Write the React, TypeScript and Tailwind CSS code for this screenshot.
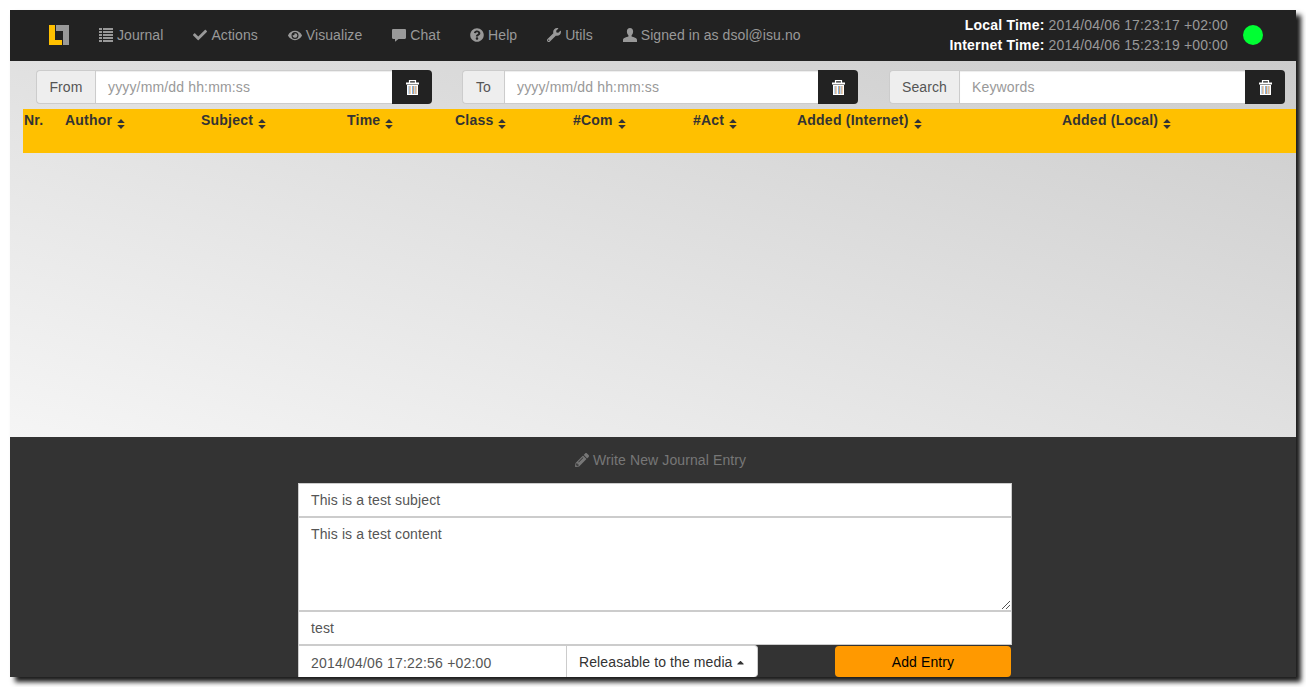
import React from "react";
import { FaCheck, FaEye, FaQuestionCircle, FaWrench, FaPencilAlt, FaCaretUp } from "react-icons/fa";

function Trash() {
  return (
    <svg width="13" height="15" viewBox="0 0 13 15" className="block">
      <path d="M3.500 3V.6h6V3" fill="none" stroke="#fff" strokeWidth="1.2" />
      <rect x="0" y="2.500" width="13" height="2" fill="#fff" />
      <rect x="1" y="5" width="11" height="10" fill="#fff" />
      <rect x="2.500" y="6" width="1" height="8" fill="#7fb0e0" />
      <rect x="3.500" y="6" width="1" height="8" fill="#d9a066" />
      <rect x="6" y="6" width="1" height="8" fill="#7fb0e0" />
      <rect x="7" y="6" width="1" height="8" fill="#d9a066" />
      <rect x="8.500" y="6" width="1" height="8" fill="#7fb0e0" />
      <rect x="9.500" y="6" width="1" height="8" fill="#d9a066" />
    </svg>
  );
}

function Sort() {
  return (
    <svg width="8" height="10" viewBox="0 0 8 10" className="ml-[5px] mt-[9px] shrink-0">
      <path d="M4 0l3.800 4H.2zM4 10L.2 6h7.600z" fill="#333" />
    </svg>
  );
}

function Logo() {
  return (
    <svg width="20" height="20" viewBox="0 0 20 20" className="block">
      <path d="M0 0h6v15h7v5H0z" fill="#ffc000" />
      <path d="M7 0h13v20h-6V6H7z" fill="#999" />
    </svg>
  );
}

function ListIcon() {
  return (
    <svg width="14" height="14" viewBox="0 0 14 14" fill="currentColor">
      {[0, 3, 6, 9, 12].map((y) => (
        <g key={y}>
          <rect x="0" y={y} width="3" height="2" />
          <rect x="4" y={y} width="10" height="2" />
        </g>
      ))}
    </svg>
  );
}

function CommentIcon() {
  return (
    <svg width="14" height="14" viewBox="0 0 14 14" fill="currentColor">
      <path d="M1.200 1h11.600c.7 0 1.200.5 1.200 1.200v7.600c0 .7-.5 1.200-1.200 1.200H6.500L3 13.800V11H1.200C.5 11 0 10.500 0 9.800V2.200C0 1.500.5 1 1.200 1z" />
    </svg>
  );
}

function UserIcon() {
  return (
    <svg width="14" height="14" viewBox="0 0 14 14" fill="currentColor">
      <path d="M7 0c2 0 3.100 1.400 3.100 3.500 0 1.500-.6 3-1.500 3.800v1.200c1.800.6 5.400 1.500 5.400 3.300V14H0v-2.200c0-1.800 3.600-2.700 5.400-3.300V7.300C4.500 6.500 3.900 5 3.900 3.500 3.900 1.400 5 0 7 0z" />
    </svg>
  );
}

function Nav({ icon, label }: { icon: React.ReactNode; label: string }) {
  return (
    <div className="flex items-center gap-[4px] tracking-[0.07px]">
      <span className="flex w-[14px] justify-center">{icon}</span>
      <span>{label}</span>
    </div>
  );
}

function Group({ label, labelW, placeholder, className }: { label: string; labelW: string; placeholder: string; className: string }) {
  return (
    <div className={`flex h-[34px] w-[396px] shrink-0 ${className}`}>
      <div className={`flex items-center justify-center rounded-l-[4px] border border-r-0 border-[#ccc] bg-[#eee] text-[#555] ${labelW}`}>{label}</div>
      <div className="flex min-w-0 flex-1 items-center border-y border-l border-[#ccc] bg-white px-3 tracking-[0.15px] text-[#999] shadow-[inset_0_1px_1px_rgba(0,0,0,0.075)]">{placeholder}</div>
      <div className="flex w-10 items-center justify-center rounded-r-[4px] bg-[#222]">
        <Trash />
      </div>
    </div>
  );
}

const cols: [string, string][] = [
  ["Author", "w-[136px]"],
  ["Subject", "w-[146px]"],
  ["Time", "w-[108px]"],
  ["Class", "w-[118px]"],
  ["#Com", "w-[120px]"],
  ["#Act", "w-[104px]"],
  ["Added (Internet)", "w-[265px]"],
  ["Added (Local)", "w-[200px]"],
];

export default function App() {
  return (
    <div className="h-[687px] w-[1306px] overflow-hidden bg-white p-[10px] text-[14px] leading-[20px] tracking-[0.11px] [font-family:'Liberation_Sans',Arial,sans-serif]">
      <div className="flex h-[667px] w-[1286px] flex-col shadow-[5px_5px_5px_rgba(0,0,0,0.9)]">
        <header className="flex h-[51px] shrink-0 items-center gap-[30px] bg-[#222] pb-[1px] pl-[39px] pr-[33px] text-[#999]">
          <Logo />
          <Nav icon={<ListIcon />} label="Journal" />
          <Nav icon={<FaCheck size={14} />} label="Actions" />
          <Nav icon={<FaEye size={15} />} label="Visualize" />
          <Nav icon={<CommentIcon />} label="Chat" />
          <Nav icon={<FaQuestionCircle size={14} />} label="Help" />
          <Nav icon={<FaWrench size={14} />} label="Utils" />
          <Nav icon={<UserIcon />} label="Signed in as dsol@isu.no" />
          <div className="ml-auto flex items-center gap-[15px]">
            <div className="text-right tracking-[0.15px]">
              <div><b className="tracking-[0.2px] text-white">Local Time:</b> 2014/04/06 17:23:17 +02:00</div>
              <div><b className="tracking-[0.2px] text-white">Internet Time:</b> 2014/04/06 15:23:19 +00:00</div>
            </div>
            <div className="h-5 w-5 rounded-full bg-[#0f3]" />
          </div>
        </header>
        <main className="flex h-[376px] shrink-0 flex-col bg-[linear-gradient(to_top_right,#f5f5f5,#ccc)]">
          <div className="flex pb-[5px] pl-[26px] pt-[9px]">
            <Group className="" label="From" labelW="w-[59px]" placeholder="yyyy/mm/dd hh:mm:ss" />
            <Group className="ml-[30px]" label="To" labelW="w-[42px]" placeholder="yyyy/mm/dd hh:mm:ss" />
            <Group className="ml-[31px]" label="Search" labelW="w-[70px]" placeholder="Keywords" />
          </div>
          <div className="ml-[13px] flex h-[44px] bg-[#ffc000] pl-[1px] pt-[1px] font-bold tracking-[0.22px] text-[#333]">
            <div className="w-[41px]">Nr.</div>
            {cols.map(([t, w]) => (
              <div key={t} className={`flex items-start ${w}`}>
                <span>{t}</span>
                <Sort />
              </div>
            ))}
          </div>
        </main>
        <section className="flex min-h-0 flex-1 flex-col overflow-hidden bg-[#333]">
          <div className="ml-[565px] mt-[13px] flex h-[20px] items-center gap-[4px] text-[#777]">
            <FaPencilAlt size={14} />
            <span>Write New Journal Entry</span>
          </div>
          <div className="ml-[288px] mt-[13px] w-[714px]">
            <div className="flex h-[34px] items-center border border-[#ccc] bg-white px-3 text-[#555]">This is a test subject</div>
            <div className="relative h-[94px] border border-[#ccc] bg-white px-3 py-[6px] text-[#555]">
              This is a test content
              <svg width="10" height="10" viewBox="0 0 10 10" className="absolute bottom-0 right-0">
                <path d="M1 9L9 1M5 9l4-4" stroke="#555" strokeWidth="1" />
              </svg>
            </div>
            <div className="flex h-[34px] items-center border border-[#ccc] bg-white px-3 text-[#555]">test</div>
            <div className="flex h-[34px] items-start">
              <div className="flex h-[34px] w-[269px] items-center border-x border-t border-[#ccc] bg-white px-3 tracking-[0.19px] text-[#555]">2014/04/06 17:22:56 +02:00</div>
              <div className="flex h-[32px] w-[191px] items-center gap-[2px] rounded-r-[4px] border-r border-t border-[#ccc] bg-white pl-3 pt-[1px] text-[#333]">
                Releasable to the media
                <FaCaretUp size={11} />
              </div>
              <div className="ml-[77px] mt-[1px] flex h-[31px] w-[176px] items-center justify-center rounded-[4px] bg-[#f90] text-black">Add Entry</div>
            </div>
          </div>
        </section>
      </div>
    </div>
  );
}
